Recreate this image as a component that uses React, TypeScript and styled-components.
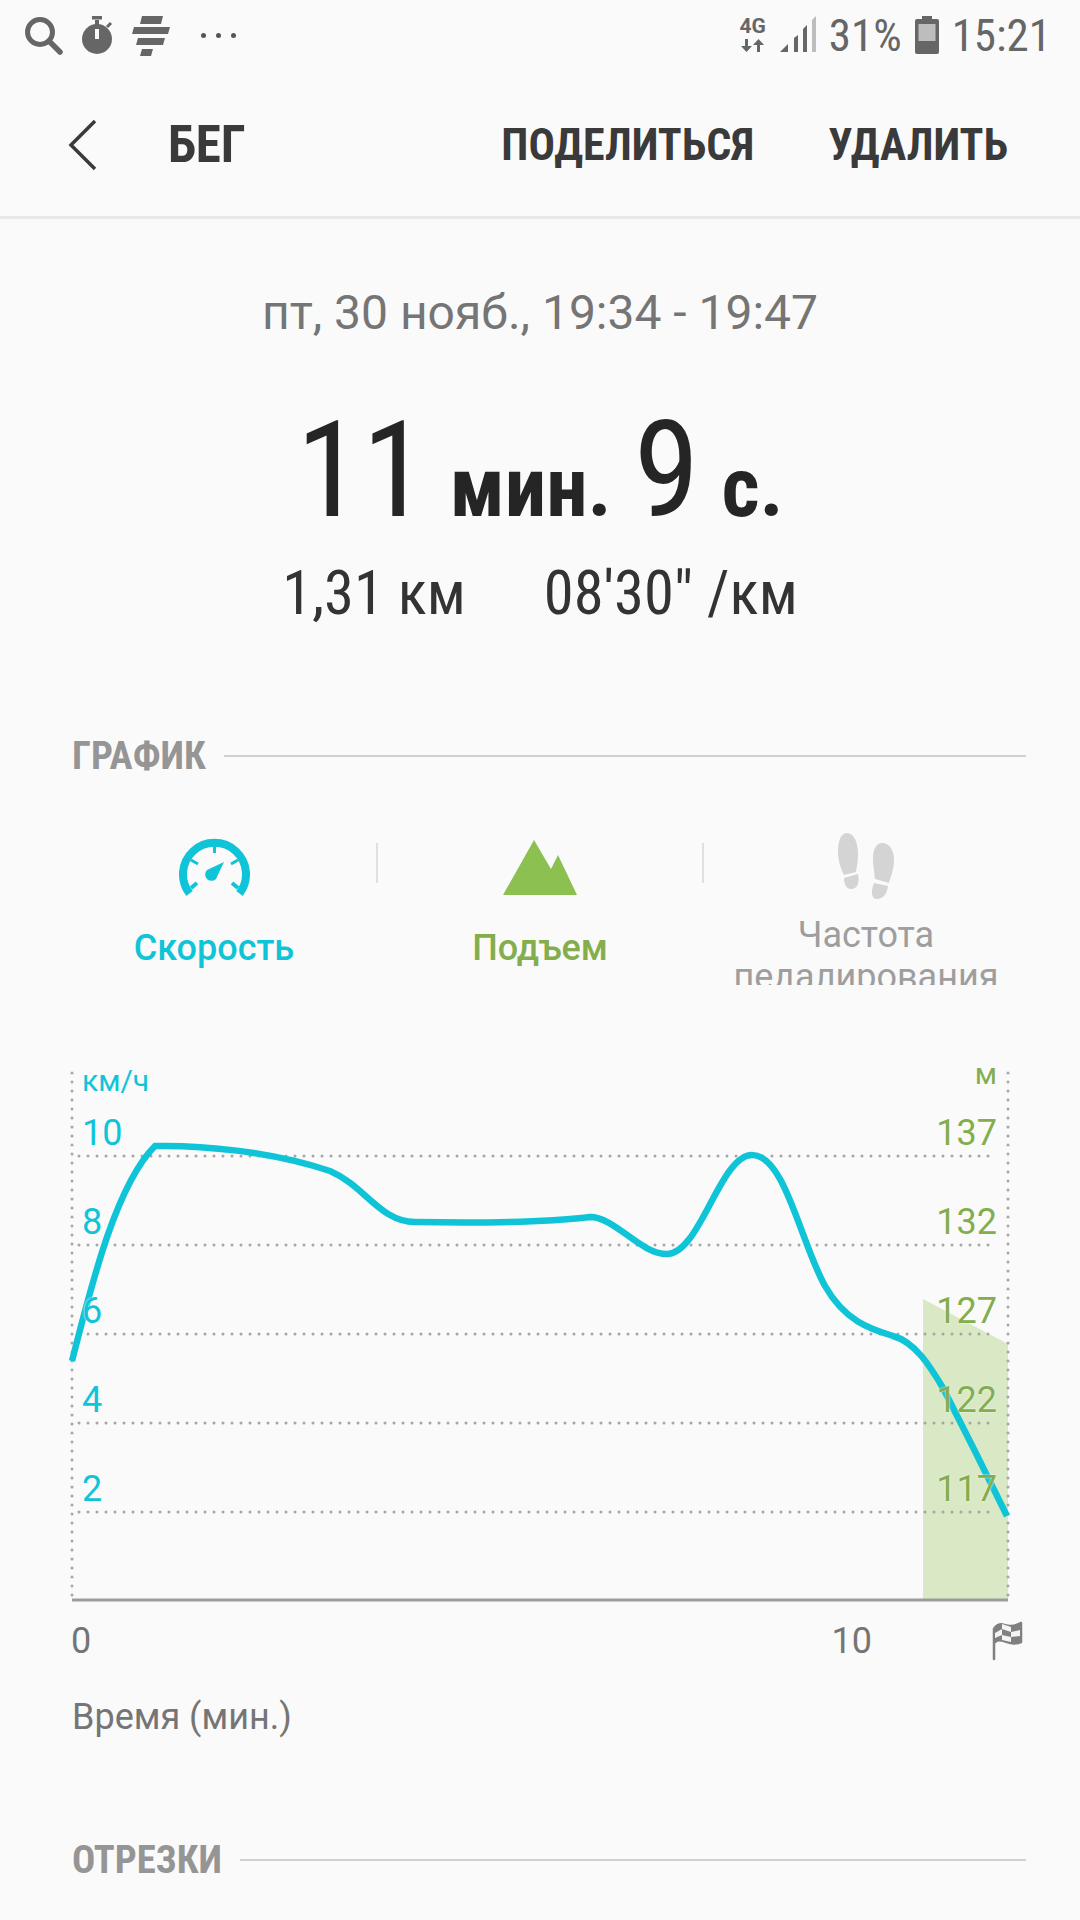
import React from "react";
import styled, { createGlobalStyle } from "styled-components";

const CONDENSED = `"Roboto Condensed", "Liberation Sans Narrow", Roboto, sans-serif`;
const TEAL = "#10c4d8";
const GREEN = "#84ad4d";
const FOOT = "#d4d4d4";

const SPEED_PATH =
  "M72 1360 C90 1290 115 1185 155 1145 C200 1144 270 1150 330 1170 C365 1185 380 1221 415 1221 " +
  "C470 1222 540 1222 590 1216 C615 1216 640 1253 667 1253 C700 1253 720 1154 752 1154 " +
  "C785 1154 800 1240 825 1285 C845 1320 870 1328 893 1335 C915 1341 930 1365 943 1387 " +
  "C965 1430 985 1470 1007 1515";

const GRID_YS = [1155, 1244, 1333, 1422, 1511];
const SPEED_LABELS = ["10", "8", "6", "4", "2"];
const HEIGHT_LABELS = ["137", "132", "127", "122", "117"];

const App: React.FC = () => (
  <>
    <GlobalStyle />
    <Screen>
      <StatusBar>
        <StatusIcons>
          <svg width="40" height="40" viewBox="0 0 40 40">
            <circle cx="16" cy="16" r="12.5" fill="none" stroke="#666" strokeWidth="5" />
            <line x1="25" y1="25" x2="36" y2="36" stroke="#666" strokeWidth="5.5" strokeLinecap="round" />
          </svg>
          <svg width="32" height="38" viewBox="0 0 32 38">
            <circle cx="15" cy="23" r="15" fill="#666" />
            <rect x="10" y="0" width="10" height="3.5" fill="#666" />
            <rect x="13" y="4" width="4" height="6" fill="#666" />
            <line x1="25" y1="11" x2="29" y2="7" stroke="#666" strokeWidth="3" />
            <rect x="13" y="13" width="4" height="10" fill="#fafafa" />
          </svg>
          <svg width="38" height="40" viewBox="0 0 38 40">
            <polygon points="10,0 31,0 29,8 8,8" fill="#666" />
            <polygon points="2,11 38,11 36,18 0,18" fill="#666" />
            <polygon points="6,22 33,22 31,29 4,29" fill="#666" />
            <polygon points="10,33 21,33 19,40 8,40" fill="#666" />
          </svg>
          <Dots>
            <Dot /><Dot /><Dot />
          </Dots>
        </StatusIcons>
        <StatusRight>
          <NetworkBadge>
            <NetworkText>4G</NetworkText>
            <svg width="24" height="14" viewBox="0 0 24 14">
              <path d="M4 0h3v7h4l-5.500 6L0 7h4z" fill="#666" />
              <path d="M16 13h3V6h4l-5.500-6L12 6h4z" fill="#666" />
            </svg>
          </NetworkBadge>
          <svg width="36" height="36" viewBox="0 0 36 36">
            <polygon points="0,36 8,28 8,36" fill="#666" />
            <polygon points="14,22 18,19 18,36 14,36" fill="#666" />
            <polygon points="23,13 27,9 27,36 23,36" fill="#666" />
            <polygon points="32,4 36,0 36,36 32,36" fill="#bdbdbd" />
          </svg>
          <StatusText>31%</StatusText>
          <svg width="24" height="38" viewBox="0 0 24 38">
            <path d="M7 0h10v3h5a2 2 0 0 1 2 2v31a2 2 0 0 1-2 2H2a2 2 0 0 1-2-2V5a2 2 0 0 1 2-2h5z" fill="#666" />
            <rect x="3.500" y="8" width="17" height="17" fill="#bdbdbd" />
          </svg>
          <StatusText>15:21</StatusText>
        </StatusRight>
      </StatusBar>

      <Toolbar>
        <BackButton>
          <svg width="30" height="52" viewBox="0 0 30 52">
            <polyline points="27,2 3,26 27,50" fill="none" stroke="#3a3a3a" strokeWidth="3.500" />
          </svg>
        </BackButton>
        <ToolbarTitle>БЕГ</ToolbarTitle>
        <ToolbarActions>
          <ToolbarAction>ПОДЕЛИТЬСЯ</ToolbarAction>
          <ToolbarAction>УДАЛИТЬ</ToolbarAction>
        </ToolbarActions>
      </Toolbar>

      <Summary>
        <DateRange>пт, 30 нояб., 19:34 - 19:47</DateRange>
        <Duration>
          <BigNumber>11</BigNumber>
          <BigUnit>мин.</BigUnit>
          <BigNumber>9</BigNumber>
          <BigUnit>с.</BigUnit>
        </Duration>
        <Stats>
          <span>1,31 км</span>
          <span>08'30" /км</span>
        </Stats>
      </Summary>

      <SectionHeader>
        <SectionTitle>ГРАФИК</SectionTitle>
        <SectionRule />
      </SectionHeader>

      <Tabs>
        <Tab>
          <TabIcon>
            <svg width="72" height="58" viewBox="179 836 72 58">
              <path d="M190.500 891.500 A31.500 31.500 0 1 1 240.500 891.500" fill="none" stroke={TEAL} strokeWidth="8" />
              <line x1="215.500" y1="844" x2="215.500" y2="851" stroke={TEAL} strokeWidth="3" />
              <line x1="192" y1="858" x2="199" y2="862" stroke={TEAL} strokeWidth="3" />
              <line x1="239" y1="858" x2="232" y2="862" stroke={TEAL} strokeWidth="3" />
              <line x1="192" y1="886" x2="198" y2="881" stroke={TEAL} strokeWidth="4" />
              <line x1="239" y1="886" x2="233" y2="881" stroke={TEAL} strokeWidth="4" />
              <path d="M225 860 L217 877 A6 6 0 1 1 208 868 Z" fill={TEAL} />
            </svg>
          </TabIcon>
          <TabLabel $color={TEAL}>Скорость</TabLabel>
        </Tab>
        <TabDivider />
        <Tab>
          <TabIcon>
            <svg width="76" height="58" viewBox="502 836 76 58">
              <polygon points="534,838 551,867 558,853 577,893 503,893" fill="#8cc152" />
            </svg>
          </TabIcon>
          <TabLabel $color={GREEN}>Подъем</TabLabel>
        </Tab>
        <TabDivider />
        <Tab>
          <FootIcon>
            <svg width="62" height="68" viewBox="834 831 62 68">
              <path d="M846 832 C853 832 857 842 857 852 C857 860 856 865 855 871 L843 874 C840 868 837 860 837 850 C837 840 840 832 846 832Z" fill={FOOT} />
              <path d="M843 877 L857 873 C859 882 856 888 850 888 C845 888 843 883 843 877Z" fill={FOOT} />
              <path d="M881 842 C889 842 893 850 893 859 C893 868 890 875 888 882 L874 878 C873 870 872 864 872 857 C872 849 875 842 881 842Z" fill={FOOT} />
              <path d="M873 882 L887 885 C886 893 882 898 876 898 C871 898 869 892 873 882Z" fill={FOOT} />
            </svg>
          </FootIcon>
          <TabText>Частота педалирования</TabText>
        </Tab>
      </Tabs>

      <Chart>
        <svg width="960" height="550" viewBox="60 1060 960 550">
          <polygon points="923,1298 1008,1343 1008,1599 923,1599" fill="#d9e8c5" />
          {GRID_YS.map((y) => (
            <GridLine key={y} x1={79} x2={992} y1={y} y2={y} />
          ))}
          <GridLine x1={72} x2={72} y1={1072} y2={1596} />
          <GridLine x1={1008} x2={1008} y1={1072} y2={1596} />
          <line x1="72" x2="1008" y1="1599" y2="1599" stroke="#9b9b9b" strokeWidth="3" />
          <path d={SPEED_PATH} fill="none" stroke={TEAL} strokeWidth="6.500" />
        </svg>
        <LeftAxis>
          <AxisUnit>км/ч</AxisUnit>
          {SPEED_LABELS.map((v) => (
            <AxisValue key={v}>{v}</AxisValue>
          ))}
        </LeftAxis>
        <RightAxis>
          <RightUnit>м</RightUnit>
          {HEIGHT_LABELS.map((v) => (
            <AxisValue key={v}>{v}</AxisValue>
          ))}
        </RightAxis>
      </Chart>

      <TimeAxis>
        <span>0</span>
        <TenMark>10</TenMark>
        <svg width="32" height="40" viewBox="993 1620 32 40">
          <path d="M996 1658 V1628 C1002 1619 1007 1626 1013 1625 C1017 1625 1020 1623 1023 1622 V1641 C1018 1643 1014 1643 1009 1641 C1004 1639 1000 1638 997 1641" fill="#808080" stroke="#808080" strokeWidth="2.500" strokeLinecap="round" strokeLinejoin="round" />
          <polygon points="1004,1623 1013,1626 1013,1631 1004,1628" fill="#f4f4f4" />
          <polygon points="997,1632 1004,1628 1004,1634 997,1637" fill="#f4f4f4" />
          <polygon points="1013,1631 1022,1629 1022,1635 1013,1636" fill="#f4f4f4" />
          <polygon points="1004,1634 1013,1636 1013,1641 1004,1639" fill="#f4f4f4" />
        </svg>
      </TimeAxis>
      <TimeCaption>Время (мин.)</TimeCaption>

      <SegmentsHeader>
        <SectionTitle>ОТРЕЗКИ</SectionTitle>
        <SectionRule />
      </SegmentsHeader>
    </Screen>
  </>
);

const GlobalStyle = createGlobalStyle`
  html, body {
    margin: 0;
    padding: 0;
    background: #fafafa;
  }
`;

const Screen = styled.div`
  width: 1080px;
  height: 1920px;
  overflow: hidden;
  background: #fafafa;
  font-family: Roboto, sans-serif;
`;

const StatusBar = styled.div`
  height: 71px;
  display: flex;
  justify-content: space-between;
  padding: 16px 29px 0 24px;
  box-sizing: border-box;
`;

const StatusIcons = styled.div`
  display: flex;
  align-items: flex-start;
  gap: 18px;
`;

const Dots = styled.div`
  display: flex;
  gap: 10px;
  margin: 17px 0 0 13px;
`;

const Dot = styled.span`
  width: 5px;
  height: 5px;
  border-radius: 50%;
  background: #555;
`;

const StatusRight = styled.div`
  display: flex;
  align-items: flex-start;
  gap: 13px;
`;

const NetworkBadge = styled.div`
  width: 28px;
  display: flex;
  flex-direction: column;
  align-items: center;
  gap: 3px;
`;

const NetworkText = styled.span`
  font: 700 21px/20px Roboto, sans-serif;
  color: #666;
`;

const StatusText = styled.span`
  font: 400 45px/40px ${CONDENSED};
  color: #666;
`;

const Toolbar = styled.div`
  height: 148px;
  display: flex;
  align-items: center;
  box-sizing: border-box;
  padding: 2px 72px 0 68px;
  border-bottom: 3px solid #e8e8e8;
  color: #3a3a3a;
`;

const BackButton = styled.div`
  display: flex;
  width: 100px;
`;

const ToolbarTitle = styled.div`
  font: 700 51px/1 ${CONDENSED};
`;

const ToolbarActions = styled.div`
  margin-left: auto;
  display: flex;
  gap: 74px;
`;

const ToolbarAction = styled.div`
  font: 700 44px/1 ${CONDENSED};
`;

const Summary = styled.div`
  display: flex;
  flex-direction: column;
  align-items: center;
`;

const DateRange = styled.div`
  margin-top: 68px;
  font: 400 48px/52px Roboto, sans-serif;
  color: #757575;
`;

const Duration = styled.div`
  margin-top: 67px;
  display: flex;
  align-items: baseline;
  gap: 22px;
  color: #252525;
  height: 130px;
`;

const BigNumber = styled.span`
  font: 400 133px/130px ${CONDENSED};
`;

const BigUnit = styled.span`
  font: 700 83px/130px ${CONDENSED};
`;

const Stats = styled.div`
  margin-top: 23px;
  display: flex;
  gap: 78px;
  font: 400 60.5px/70px ${CONDENSED};
  color: #333;
`;

const SectionHeader = styled.div`
  margin: 105px 54px 0 72px;
  display: flex;
  align-items: center;
  gap: 18px;
`;

const SegmentsHeader = styled(SectionHeader)`
  margin-top: 99px;
`;

const SectionTitle = styled.div`
  font: 700 38.7px/44px ${CONDENSED};
  color: #959595;
`;

const SectionRule = styled.div`
  flex: 1;
  height: 2px;
  background: #d0d0d0;
`;

const Tabs = styled.div`
  margin: 54px 52px 0;
  display: flex;
  align-items: flex-start;
`;

const Tab = styled.div`
  flex: 1;
  height: 153px;
  overflow: hidden;
  display: flex;
  flex-direction: column;
  align-items: center;
`;

const TabIcon = styled.div`
  height: 58px;
  margin-top: 6px;
  display: flex;
`;

const FootIcon = styled.div`
  height: 68px;
  display: flex;
`;

const TabLabel = styled.div<{ $color: string }>`
  margin-top: 30px;
  font-size: 36px;
  line-height: 44px;
  font-weight: 500;
  color: ${(p) => p.$color};
`;

const TabText = styled.div`
  margin-top: 14px;
  width: 300px;
  text-align: center;
  font-size: 36px;
  line-height: 42px;
  color: #9e9e9e;
`;

const TabDivider = styled.div`
  flex: none;
  width: 2px;
  height: 40px;
  margin-top: 11px;
  background: #e0e0e0;
`;

const Chart = styled.div`
  position: relative;
  width: 960px;
  height: 550px;
  margin: 76px 0 0 60px;

  svg {
    display: block;
  }
`;

const GridLine = styled.line`
  stroke: #a6a6a6;
  stroke-width: 3;
  stroke-linecap: round;
  stroke-dasharray: 0 9;
`;

const AxisColumn = styled.div`
  position: absolute;
  top: 6px;
  display: flex;
  flex-direction: column;
  gap: 47px;
`;

const LeftAxis = styled(AxisColumn)`
  left: 22px;
  color: ${TEAL};
`;

const RightAxis = styled(AxisColumn)`
  right: 23px;
  align-items: flex-end;
  color: ${GREEN};
`;

const AxisUnit = styled.div`
  font-size: 30px;
  line-height: 28px;
  margin-bottom: -30px;
`;

const RightUnit = styled(AxisUnit)`
  margin-top: -7px;
  margin-bottom: -23px;
`;

const AxisValue = styled.div`
  font-size: 36px;
  line-height: 42px;
  text-shadow: 0 0 2px #fff;
`;

const TimeAxis = styled.div`
  margin: 8px 57px 0 71px;
  height: 44px;
  display: flex;
  align-items: center;
  font-size: 36px;
  color: #757575;
`;

const TenMark = styled.span`
  margin-left: auto;
  margin-right: 119px;
`;

const TimeCaption = styled.div`
  margin: 32px 0 0 72px;
  font-size: 36px;
  line-height: 44px;
  color: #757575;
`;

export default App;
